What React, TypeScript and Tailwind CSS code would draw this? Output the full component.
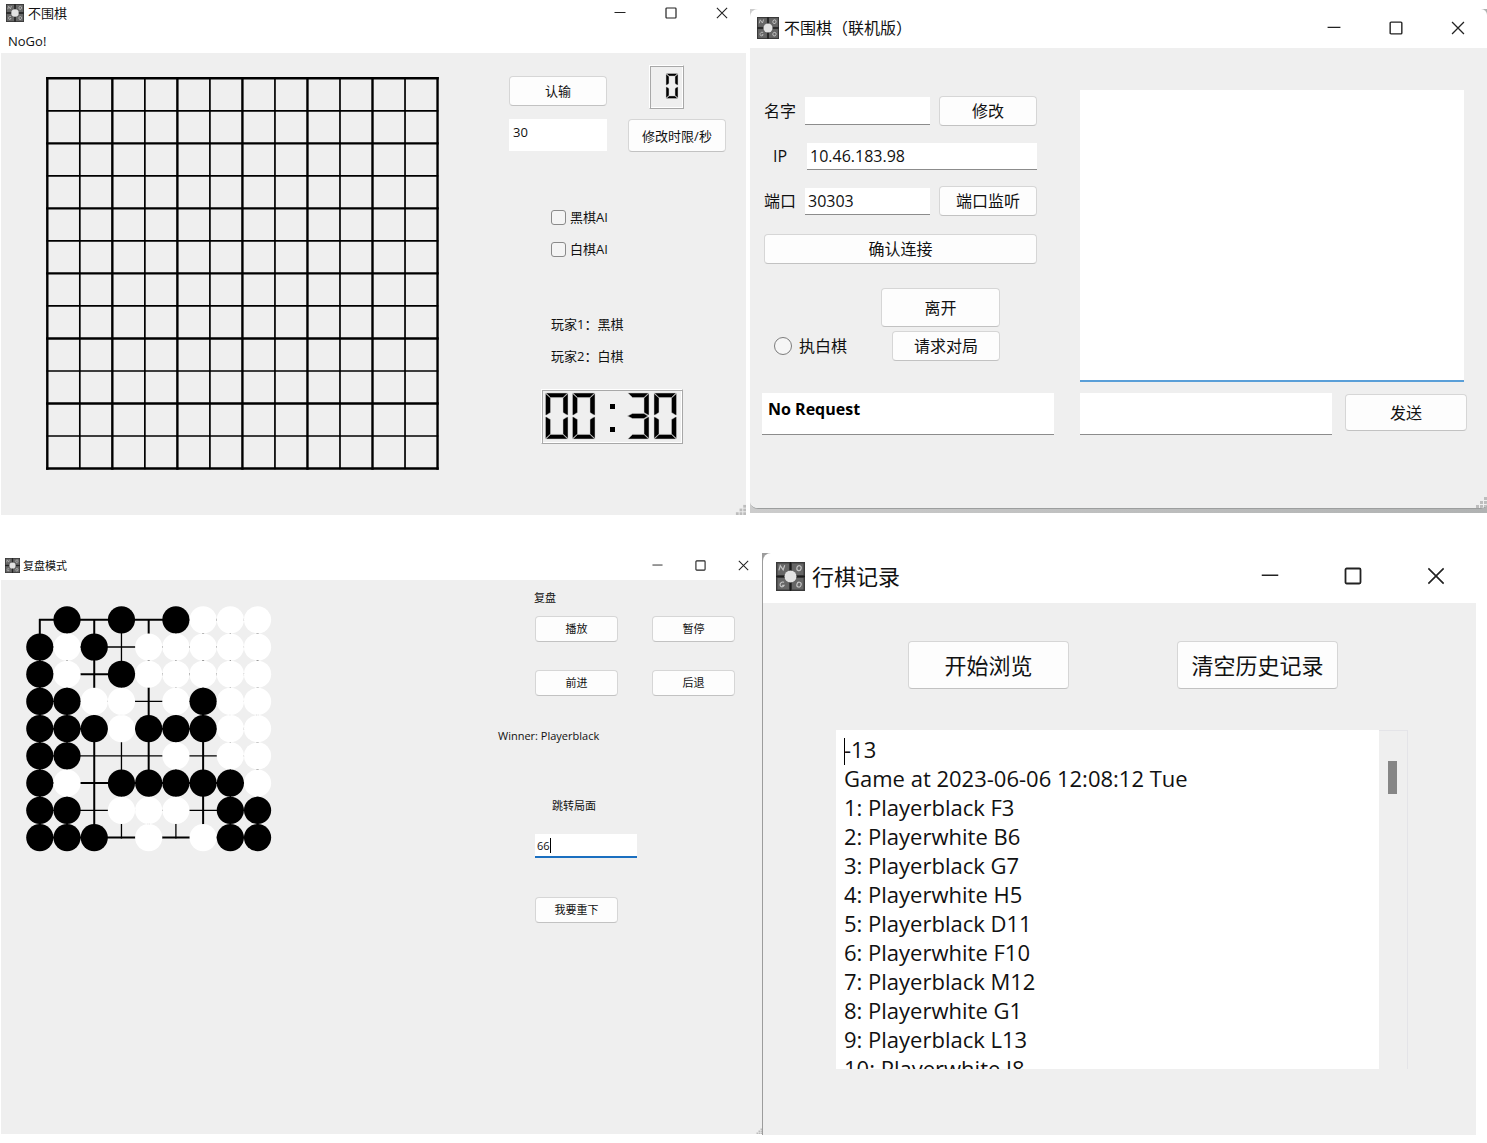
import React, { useState } from "react";

function Logo({ className }: { className: string }) {
  return (
    <svg viewBox="0 0 30 30" className={className} aria-hidden="true">
      <rect width="30" height="30" fill="#3a3a3a" />
      <rect x="1.5" y="1.5" width="12" height="12" fill="#666" />
      <rect x="16.5" y="1.5" width="12" height="12" fill="#666" />
      <rect x="1.5" y="16.5" width="12" height="12" fill="#666" />
      <rect x="16.5" y="16.5" width="12" height="12" fill="#666" />
      <path d="M15 0V30M0 15H30" stroke="#1c1c1c" strokeWidth="1.5" />
      <g fill="none" stroke="#c4c4c4" strokeWidth="1.2">
        <path d="M3 8.6 4.4 3.8 7.4 8.2 9 3.4" />
        <ellipse cx="23.8" cy="6.4" rx="2.2" ry="2.6" transform="rotate(15 23.8 6.4)" />
        <path d="M8.4 21C5.8 20 4 21.8 4.2 24 4.6 26.4 7.8 26 8.4 24.2H6.4" />
        <ellipse cx="23.8" cy="23.4" rx="2.2" ry="2.6" transform="rotate(15 23.8 23.4)" />
      </g>
      <circle cx="15" cy="15" r="6.2" fill="#e2e2e2" />
    </svg>
  );
}

function WindowControls({ className, icon }: { className: string; icon: string }) {
  return (
    <div className={`flex items-center ${className}`}>
      <button type="button" aria-label="Minimize">
        <svg viewBox="0 0 12 12" className={icon} fill="none" stroke="#222" strokeWidth="1">
          <path d="M0.5 5.5H11.5" />
        </svg>
      </button>
      <button type="button" aria-label="Maximize">
        <svg viewBox="0 0 12 12" className={icon} fill="none" stroke="#222" strokeWidth="1.2">
          <rect x="1" y="1" width="10" height="10" rx="0.8" />
        </svg>
      </button>
      <button type="button" aria-label="Close">
        <svg viewBox="0 0 12 12" className={icon} fill="none" stroke="#222" strokeWidth="1.1">
          <path d="M0.9 0.9 11.1 11.1M11.1 0.9 0.9 11.1" />
        </svg>
      </button>
    </div>
  );
}

function PushButton({ children, className }: { children: React.ReactNode; className: string }) {
  return (
    <button
      type="button"
      className={`flex items-center justify-center rounded border border-[#d6d6d6] border-b-[#c2c2c2] bg-[#fdfdfd] ${className}`}
    >
      {children}
    </button>
  );
}

function SizeGrip({ className }: { className: string }) {
  return (
    <svg viewBox="0 0 12 12" className={`absolute right-0 bottom-0 ${className}`} fill="#bdbdbd" aria-hidden="true">
      <rect x="9" y="1" width="3" height="3" />
      <rect x="5" y="5" width="3" height="3" />
      <rect x="9" y="5" width="3" height="3" />
      <rect x="1" y="9" width="3" height="3" />
      <rect x="5" y="9" width="3" height="3" />
      <rect x="9" y="9" width="3" height="3" />
    </svg>
  );
}

const SEGMENTS: Record<string, string> = { "0": "abcdef", "3": "abcdg" };

function Digit({ value, x, y, w, h, t }: { value: string; x: number; y: number; w: number; h: number; t: number }) {
  const m = h / 2;
  const g = 0.4;
  const shapes: Record<string, number[][]> = {
    a: [[g, 0], [w - g, 0], [w - t, t - g], [t, t - g]],
    b: [[w, g], [w, m - 1], [w - 1, m - 1], [w - t, m - t / 2 - 1], [w - t, t]],
    c: [[w, h - g], [w, m + 1], [w - 1, m + 1], [w - t, m + t / 2 + 1], [w - t, h - t]],
    d: [[g, h], [w - g, h], [w - t, h - t + g], [t, h - t + g]],
    e: [[0, h - g], [0, m + 1], [1, m + 1], [t, m + t / 2 + 1], [t, h - t]],
    f: [[0, g], [0, m - 1], [1, m - 1], [t, m - t / 2 - 1], [t, t]],
    g: [[0, m], [t, m - t / 2], [w - t, m - t / 2], [w - 1, m], [w - t, m + t / 2], [t, m + t / 2]],
  };
  return (
    <g transform={`translate(${x} ${y})`} stroke="#c8c8c8" strokeWidth="0.5">
      {SEGMENTS[value].split("").map((s) => (
        <polygon key={s} points={shapes[s].map((p) => p.join(",")).join(" ")} />
      ))}
    </g>
  );
}

const LCD_FRAME =
  "border border-t-white border-l-white border-r-[#a8a8a8] border-b-[#a8a8a8] shadow-[inset_1px_1px_0_#a8a8a8,inset_-1px_-1px_0_#ffffff]";

function EmptyBoard() {
  const steps = Array.from({ length: 13 }, (_, i) => i);
  return (
    <svg viewBox="0 0 395 395" className="h-[395px] w-[395px] shrink-0" stroke="#000" strokeLinecap="square" role="img" aria-label="棋盘">
      {steps.map((i) => {
        const p = 2.3 + i * 32.52;
        const width = i % 2 === 0 ? 2.4 : 1.7;
        return (
          <g key={i} strokeWidth={width}>
            <path d={`M${p} 2.3V392.5`} />
            <path d={`M2.3 ${p}H392.5`} />
          </g>
        );
      })}
    </svg>
  );
}

const POSITION = [
  ".B.B.BWWW",
  "BWB.WWWWW",
  "BW.BWWWWW",
  "BBWW.WBWW",
  "BBBWBBBWW",
  "BB...W.WW",
  "BW.BBBBBW",
  "BB.WWW.BB",
  "BBB.W.WBB",
];

function ReplayBoard() {
  const at = (i: number) => 19.8 + i * 27.22;
  return (
    <svg viewBox="0 0 260 260" className="h-[260px] w-[260px] shrink-0" role="img" aria-label="复盘棋盘">
      <g stroke="#000">
        {POSITION.map((_, i) => (
          <g key={i} strokeWidth={i % 2 === 0 ? 2 : 1.3}>
            <path d={`M${at(i)} 19V238.5`} />
            <path d={`M19 ${at(i)}H238.5`} />
          </g>
        ))}
      </g>
      {POSITION.flatMap((row, y) =>
        row.split("").map((c, x) =>
          c === "." ? null : (
            <circle key={`${x}-${y}`} cx={at(x)} cy={at(y)} r="13.6" fill={c === "B" ? "#000" : "#fff"} />
          ),
        ),
      )}
    </svg>
  );
}

function GameWindow() {
  const [limit, setLimit] = useState("30");
  return (
    <section className="ml-px flex flex-col bg-white text-[13px] leading-5">
      <header className="flex h-[26px] items-center pl-[5px]">
        <Logo className="size-[18px]" />
        <h2 className="ml-1">不围棋</h2>
        <WindowControls className="mr-[18px] ml-auto gap-[39px]" icon="size-3" />
      </header>
      <nav className="flex h-[27px] items-center pt-0.5 pl-[7px]">
        <button type="button">NoGo!</button>
      </nav>
      <div className="relative flex flex-1 justify-between bg-[#efefef] pr-5 pl-[44px]">
        <div className="pt-[23px]">
          <EmptyBoard />
        </div>
        <div className="w-[217px] pt-3">
          <div className="grid grid-cols-[98px_98px] items-end justify-between">
            <PushButton className="mb-[3px] h-[30px]">认输</PushButton>
            <div className={`ml-[21px] h-11 w-[35px] ${LCD_FRAME}`}>
              <svg viewBox="0 0 33 42" className="h-[42px] w-[33px]" role="img" aria-label="0">
                <Digit value="0" x={16} y={7.5} w={12} h={25} t={3} />
              </svg>
            </div>
          </div>
          <div className="mt-2.5 grid grid-cols-[98px_98px] justify-between">
            <input
              aria-label="时限"
              value={limit}
              onChange={(e) => setLimit(e.target.value)}
              className="h-8 min-w-0 bg-white px-1 pb-1.5 outline-none"
            />
            <PushButton className="h-[33px]">修改时限/秒</PushButton>
          </div>
          <div className="mt-[55px] ml-[42px] flex flex-col gap-3">
            {["黑棋AI", "白棋AI"].map((name) => (
              <label key={name} className="flex h-5 items-center gap-1">
                <input type="checkbox" className="size-[15px] appearance-none rounded-[3px] border border-[#8a8a8a] bg-[#f4f4f4] checked:bg-[#0067c0]" />
                {name}
              </label>
            ))}
          </div>
          <div className="mt-[55px] ml-[42px] flex flex-col gap-3">
            <p>玩家1：黑棋</p>
            <p>玩家2：白棋</p>
          </div>
          <div className={`mt-[23px] ml-8 h-[55px] w-[142px] ${LCD_FRAME}`}>
            <svg viewBox="0 0 140 53" className="h-[53px] w-[140px]" role="img" aria-label="00:30">
              <Digit value="0" x={3.5} y={3} w={22.5} h={46} t={5} />
              <Digit value="0" x={30.5} y={3} w={22.5} h={46} t={5} />
              <rect x="68" y="14" width="5" height="5" />
              <rect x="68" y="37" width="5" height="5" />
              <Digit value="3" x={85.5} y={3} w={21.5} h={46} t={5} />
              <Digit value="0" x={112} y={3} w={22.5} h={46} t={5} />
            </svg>
          </div>
        </div>
        <SizeGrip className="size-[11px]" />
      </div>
    </section>
  );
}

const LINE_EDIT = "min-w-0 border-b border-[#8c8c8c] bg-white px-[3px] outline-none";

function OnlineWindow() {
  const [ip, setIp] = useState("10.46.183.98");
  const [port, setPort] = useState("30303");
  return (
    <section className="mt-[9px] mb-0.5 bg-linear-to-r from-[#cccccc] to-[#b0b2b2] pb-1 text-[16px] leading-6">
      <div className="flex h-full flex-col overflow-hidden rounded-l-lg rounded-r-md border-b border-[#9c9e9e] bg-white">
        <header className="flex h-[39px] items-center pb-px pl-[7px]">
          <Logo className="size-[22px]" />
          <h2 className="ml-[5px]">不围棋（联机版）</h2>
          <WindowControls className="mr-[22px] ml-auto gap-12" icon="size-3.5" />
        </header>
        <div className="relative flex flex-1 gap-[26px] bg-[#efefef] pr-5 pl-3">
          <div className="w-[292px] shrink-0 pt-12">
            <div className="flex h-[30px] items-center">
              <label htmlFor="name" className="w-[43px] pl-0.5">名字</label>
              <input id="name" className={`h-7 w-[125px] ${LINE_EDIT}`} />
              <PushButton className="ml-[9px] h-[30px] w-[98px]">修改</PushButton>
            </div>
            <div className="mt-4 flex h-7 items-center">
              <label htmlFor="ip" className="w-[45px] pl-[11px]">IP</label>
              <input id="ip" value={ip} onChange={(e) => setIp(e.target.value)} className={`h-[27px] w-[230px] ${LINE_EDIT}`} />
            </div>
            <div className="mt-4 flex h-[30px] items-center">
              <label htmlFor="port" className="w-[43px] pl-0.5">端口</label>
              <input id="port" value={port} onChange={(e) => setPort(e.target.value)} className={`h-[27px] w-[125px] ${LINE_EDIT}`} />
              <PushButton className="ml-[9px] h-[30px] w-[98px]">端口监听</PushButton>
            </div>
            <PushButton className="mt-[18px] ml-0.5 h-[30px] w-[273px]">确认连接</PushButton>
            <div className="mt-6 flex w-[238px] justify-end">
              <PushButton className="h-[39px] w-[119px]">离开</PushButton>
            </div>
            <div className="mt-1 flex w-[238px] items-center justify-between pl-3">
              <label className="flex items-center gap-[7px]">
                <input type="radio" className="size-[18px] appearance-none rounded-full border border-[#7c7c7c] bg-[#f6f6f6] checked:border-[5px]" />
                执白棋
              </label>
              <PushButton className="h-[30px] w-[108px]">请求对局</PushButton>
            </div>
            <textarea
              aria-label="请求状态"
              readOnly
              value="No Request"
              className="mt-8 block h-[42px] w-full resize-none overflow-hidden border-b border-[#8c8c8c] bg-white px-1.5 py-1 font-bold text-black outline-none"
            />
          </div>
          <div className="min-w-0 flex-1 pt-[42px]">
            <div className="pr-[3px]">
              <textarea
                aria-label="聊天记录"
                readOnly
                className="block h-[292px] w-full resize-none overflow-hidden border-b-2 border-[#5a9fd8] bg-white px-1.5 py-1 outline-none"
              />
            </div>
            <div className="mt-[11px] flex items-start gap-[13px]">
              <input aria-label="消息" className="h-[42px] min-w-0 flex-1 border-b border-[#8c8c8c] bg-white px-1.5 outline-none" />
              <PushButton className="mt-px h-[37px] w-[122px]">发送</PushButton>
            </div>
          </div>
          <SizeGrip className="size-3" />
        </div>
      </div>
    </section>
  );
}

function ReplayWindow() {
  const [move, setMove] = useState("66");
  return (
    <section className="mb-px ml-px flex flex-col bg-white text-[11px] leading-4">
      <header className="flex h-[27px] items-center pb-0.5 pl-1">
        <Logo className="size-[15px]" />
        <h2 className="ml-[3px]">复盘模式</h2>
        <WindowControls className="mr-[13px] ml-auto gap-8" icon="size-[11px]" />
      </header>
      <div className="relative flex flex-1 justify-between bg-[#efefef] pr-[27px] pl-[19px]">
        <div className="pt-5">
          <ReplayBoard />
        </div>
        <div className="w-[237px] pt-2.5">
          <h3 className="ml-9">复盘</h3>
          <div className="mt-2.5 ml-[37px] grid grid-cols-[83px_83px] justify-between gap-y-7">
            <PushButton className="h-[26px]">播放</PushButton>
            <PushButton className="h-[26px]">暂停</PushButton>
            <PushButton className="h-[26px]">前进</PushButton>
            <PushButton className="h-[26px]">后退</PushButton>
          </div>
          <p className="mt-8">Winner: Playerblack</p>
          <label htmlFor="move" className="mt-[54px] ml-[54px] block">跳转局面</label>
          <div className="relative mt-5 ml-[37px] w-[102px]">
            <input
              id="move"
              value={move}
              onChange={(e) => setMove(e.target.value)}
              className="h-6 w-full border-b-2 border-[#1a6fc0] bg-white px-0.5 outline-none"
            />
            <span className="absolute top-1 left-[15px] h-[15px] w-px bg-black" />
          </div>
          <PushButton className="mt-[39px] ml-[37px] h-[26px] w-[83px]">我要重下</PushButton>
        </div>
        <SizeGrip className="size-1.5" />
      </div>
    </section>
  );
}

const LOG = `-13
Game at 2023-06-06 12:08:12 Tue
1: Playerblack F3
2: Playerwhite B6
3: Playerblack G7
4: Playerwhite H5
5: Playerblack D11
6: Playerwhite F10
7: Playerblack M12
8: Playerwhite G1
9: Playerblack L13
10: Playerwhite J8`;

function HistoryWindow() {
  return (
    <section className="mr-[11px] bg-[#9c9c9c] pl-px text-[22px] leading-[29px]">
      <div className="flex h-full flex-col overflow-hidden rounded-tl-lg bg-white">
        <header className="flex h-[50px] items-center pb-1 pl-[13px]">
          <Logo className="size-[29px]" />
          <h2 className="ml-[7px]">行棋记录</h2>
          <WindowControls className="mr-[31px] ml-auto gap-[65px]" icon="size-[18px]" />
        </header>
        <div className="flex-1 bg-[#efefef] pt-[38px] pr-[68px] pl-[73px]">
          <div className="flex justify-between pr-[70px] pl-[72px]">
            <PushButton className="h-12 w-[161px]">开始浏览</PushButton>
            <PushButton className="h-12 w-[161px]">清空历史记录</PushButton>
          </div>
          <div className="relative mt-[41px] flex h-[339px]">
            <textarea
              aria-label="历史记录"
              readOnly
              value={LOG}
              className="h-full min-w-0 flex-1 resize-none overflow-hidden bg-white px-2 pt-[5px] whitespace-pre outline-none"
            />
            <span className="absolute top-2 left-2 h-[27px] w-px bg-black" />
            <div className="w-[29px] border-t border-r border-[#e4e4e8] pt-[30px] pl-[9px]">
              <div className="h-[33px] w-[9px] bg-[#868686]" />
            </div>
          </div>
        </div>
      </div>
    </section>
  );
}

export default function App() {
  return (
    <main className="min-h-screen bg-white font-['Open_Sans','Noto_Sans_CJK_SC',sans-serif] text-[#111]" lang="zh-CN">
      <div className="grid min-h-[515px] grid-cols-[746fr_737fr] gap-1">
        <GameWindow />
        <OnlineWindow />
      </div>
      <div className="mt-[38px] grid min-h-[582px] grid-cols-[762fr_725fr]">
        <ReplayWindow />
        <HistoryWindow />
      </div>
    </main>
  );
}
